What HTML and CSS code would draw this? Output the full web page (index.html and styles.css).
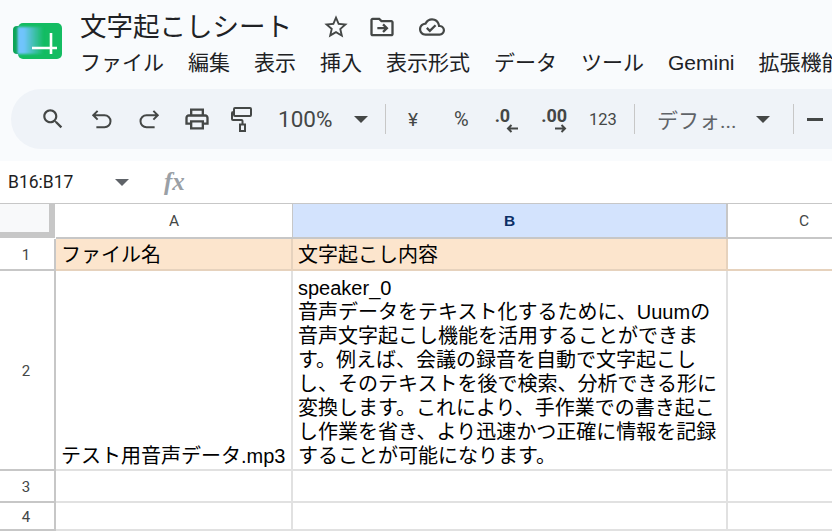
FILE: index.html
```html
<!DOCTYPE html>
<html>
	<head>
		<meta charset="UTF-8">
		<title>文字起こしシート</title>
		<link rel="stylesheet" href="styles.css">
	</head>
	<body>
		<!--title and menu-->
		<div class="top">
			<svg class="logo" width="50" height="37" viewBox="0 0 50 37">
				<defs>
					<linearGradient id="logoFade" x1="0" x2="1" y1="0" y2="0">
						<stop offset="0" stop-color="#6fc4fc"/>
						<stop offset="0.25" stop-color="#6fc4fc"/>
						<stop offset="1" stop-color="#14bc62"/>
					</linearGradient>
					<filter id="logoSoft" x="-20%" y="-20%" width="140%" height="140%">
						<feGaussianBlur stdDeviation="0.8"/>
					</filter>
				</defs>
				<rect x="0" y="3" width="20" height="28" rx="4" fill="#0ca556"/>
				<rect x="5" y="0" width="44" height="36" rx="5" fill="#14bc62"/>
				<rect x="4.500" y="4" width="26" height="27" fill="url(#logoFade)" filter="url(#logoSoft)"/>
				<path d="M19 25h25M38 10v21" stroke="#fff" stroke-width="2.600" fill="none"/>
			</svg>
			<div class="top-text">
				<div class="title-row">
					<span class="doc-title">文字起こしシート</span>
					<svg class="title-icon title-star" width="28" height="28" viewBox="0 0 24 24"><path d="M22 9.24l-7.19-.62L12 2 9.19 8.63 2 9.24l5.46 4.73L5.82 21 12 17.27 18.18 21l-1.63-7.03L22 9.24zM12 15.4l-3.76 2.27 1-4.28-3.32-2.88 4.38-.38L12 6.1l1.71 4.04 4.38.38-3.32 2.88 1 4.28L12 15.4z"/></svg>
					<svg class="title-icon title-folder" width="28" height="28" viewBox="0 0 24 24"><path d="M20 6h-8l-2-2H4c-1.1 0-2 .9-2 2v12c0 1.1.9 2 2 2h16c1.1 0 2-.9 2-2V8c0-1.1-.9-2-2-2zm0 12H4V6h5.17l2 2H20v10zM12.2 10.4l1.6 1.6H8v2h5.8l-1.6 1.6 1.4 1.4 4-4-4-4-1.4 1.4z"/></svg>
					<svg class="title-icon" width="26" height="26" viewBox="0 0 24 24"><path d="M19.35 10.04C18.67 6.59 15.64 4 12 4 9.11 4 6.6 5.64 5.35 8.04 2.34 8.36 0 10.91 0 14c0 3.31 2.69 6 6 6h13c2.76 0 5-2.24 5-5 0-2.64-2.05-4.78-4.65-4.96zM19 18H6c-2.21 0-4-1.79-4-4 0-2.05 1.53-3.76 3.56-3.97l1.07-.11.5-.95C8.08 7.14 9.94 6 12 6c2.62 0 4.88 1.86 5.39 4.43l.3 1.5 1.53.11c1.56.1 2.78 1.41 2.78 2.96 0 1.65-1.35 3-3 3zm-9-3.82l-2.09-2.09L6.5 13.5 10 17l6-6-1.41-1.41L10 14.18z"/></svg>
				</div>
				<div class="menu">
					<span>ファイル</span>
					<span>編集</span>
					<span>表示</span>
					<span>挿入</span>
					<span>表示形式</span>
					<span>データ</span>
					<span>ツール</span>
					<span>Gemini</span>
					<span>拡張機能</span>
				</div>
			</div>
		</div>

		<!--toolbar-->
		<div class="toolbar">
			<svg class="tool tool-search" width="26" height="26" viewBox="0 0 24 24"><path d="M15.5 14h-.79l-.28-.27C15.41 12.59 16 11.11 16 9.5 16 5.91 13.09 3 9.5 3S3 5.91 3 9.5 5.91 16 9.5 16c1.61 0 3.09-.59 4.23-1.57l.27.28v.79l5 4.99L20.49 19l-4.99-5zm-6 0C7.01 14 5 11.99 5 9.5S7.01 5 9.5 5 14 7.01 14 9.5 11.99 14 9.5 14z"/></svg>
			<svg class="tool tool-undo" width="30" height="30" viewBox="0 0 24 24"><path class="line" d="M8.5 5.5L5 9l3.5 3.500M5 9h9a4.800 4.800 0 0 1 0 9.600H7.500"/></svg>
			<svg class="tool tool-redo" width="30" height="30" viewBox="0 0 24 24"><path class="line" d="M15.500 5.500L19 9l-3.500 3.500M19 9h-9a4.800 4.800 0 0 0 0 9.600h6.500"/></svg>
			<svg class="tool tool-print" width="28" height="28" viewBox="0 0 24 24"><path d="M19 8h-1V3H6v5H5c-1.660 0-3 1.340-3 3v6h4v4h12v-4h4v-6c0-1.660-1.340-3-3-3zM8 5h8v3H8V5zm8 14H8v-4h8v4zm2-4v-2H6v2H4v-4c0-.55.45-1 1-1h14c.55 0 1 .45 1 1v4h-2z"/></svg>
			<svg class="tool tool-paint" width="24" height="28" viewBox="0 0 24 28"><path class="paint" d="M5 3h15a1 1 0 0 1 1 1v6a1 1 0 0 1-1 1H5a1 1 0 0 1-1-1V4a1 1 0 0 1 1-1zM4 7H3a1 1 0 0 0-1 1v6a1 1 0 0 0 1 1h8.500a1 1 0 0 1 1 1v3M10 19.500h5v6.500h-5z"/></svg>
			<span class="zoom-val">100%</span>
			<i class="caret caret-zoom"></i>
			<i class="sep sep-first"></i>
			<span class="sym sym-yen">¥</span>
			<span class="sym sym-pct">%</span>
			<span class="dec dec-less">.0<svg width="14" height="11" viewBox="0 0 14 11"><path d="M13 5.500H3M6.500 2L3 5.500 6.500 9" fill="none" stroke="#444746" stroke-width="2"/></svg></span>
			<span class="dec dec-more">.00<svg width="14" height="11" viewBox="0 0 14 11"><path d="M1 5.500h10M7.500 2L11 5.500 7.500 9" fill="none" stroke="#444746" stroke-width="2"/></svg></span>
			<span class="sym sym-num">123</span>
			<i class="sep sep-num"></i>
			<span class="font-name">デフォ...</span>
			<i class="caret caret-font"></i>
			<i class="sep sep-font"></i>
			<i class="minus"></i>
		</div>

		<!--name box and formula bar-->
		<div class="formula-bar">
			<span class="name-box">B16:B17</span>
			<i class="caret caret-name"></i>
			<span class="fx">fx</span>
		</div>

		<!--sheet-->
		<div class="sheet">
			<div class="corner"></div>
			<div class="col-head">A</div>
			<div class="col-head col-on">B</div>
			<div class="col-head col-last">C</div>

			<div class="row-head">1</div>
			<div class="cell head-cell">ファイル名</div>
			<div class="cell head-cell">文字起こし内容</div>
			<div class="cell cell-last head-side"></div>

			<div class="row-head">2</div>
			<div class="cell cell-file">テスト用音声データ.mp3</div>
			<div class="cell cell-text">speaker_0<br>音声データをテキスト化するために、Uuumの<br>音声文字起こし機能を活用することができま<br>す。例えば、会議の録音を自動で文字起こし<br>し、そのテキストを後で検索、分析できる形に<br>変換します。これにより、手作業での書き起こ<br>し作業を省き、より迅速かつ正確に情報を記録<br>することが可能になります。</div>
			<div class="cell cell-last"></div>

			<div class="row-head">3</div>
			<div class="cell"></div>
			<div class="cell"></div>
			<div class="cell cell-last"></div>

			<div class="row-head">4</div>
			<div class="cell"></div>
			<div class="cell"></div>
			<div class="cell cell-last"></div>
		</div>
	</body>
</html>
```

FILE: styles.css
```css
*{
	margin: 0;
	padding: 0;
	box-sizing: border-box;
}
html,body{
	height: 531px;
	overflow: hidden;
}
body{
	width: 832px;
	background: #f9fbfd;
	color: #1f1f1f;
	font-family: "Liberation Sans", "Noto Sans CJK JP", sans-serif;
}
i{
	display: block;
	font-style: normal;
}
svg{
	display: block;
	flex: none;
}

/* title and menu */
.top{
	height: 89px;
	display: flex;
	overflow: hidden;
}
.logo{
	margin: 23px 0 0 13px;
}
.top-text{
	margin-left: 17px;
	white-space: nowrap;
}
.title-row{
	height: 49px;
	padding-top: 5px;
	display: flex;
	align-items: center;
}
.doc-title{
	font-size: 26.500px;
	line-height: 36px;
	color: #202124;
	width: 242px;
}
.title-icon{
	fill: #444746;
}
.title-star{
	margin-right: 18px;
}
.title-folder{
	margin-right: 23px;
}
.menu{
	display: flex;
	gap: 24px;
	font-size: 21px;
	line-height: 27px;
	color: #202124;
}

/* toolbar */
.toolbar{
	height: 60px;
	margin-left: 11px;
	padding-left: 29px;
	background: #eff3f8;
	border-radius: 30px 0 0 30px;
	display: flex;
	align-items: center;
	color: #444746;
	white-space: nowrap;
	overflow: hidden;
}
.tool{
	fill: #444746;
}
.tool .line{
	fill: none;
	stroke: #444746;
	stroke-width: 1.600;
}
.tool .paint{
	fill: none;
	stroke: #444746;
	stroke-width: 2;
}
.tool-undo{
	margin-left: 21px;
}
.tool-redo{
	margin-left: 17px;
}
.tool-print{
	margin-left: 19px;
}
.tool-paint{
	margin-left: 19px;
}
.zoom-val{
	font-size: 22.500px;
	margin-left: 24px;
	width: 56px;
	font-family: "Roboto", sans-serif;
}
.caret{
	width: 0;
	height: 0;
	border-left: 7px solid transparent;
	border-right: 7px solid transparent;
	border-top: 7px solid #444746;
}
.caret-zoom{
	margin-left: 20px;
}
.sep{
	width: 1px;
	height: 30px;
	background: #c7c7c7;
}
.sep-first{
	margin-left: 17px;
}
.sym{
	font-size: 19px;
	font-family: "Roboto", sans-serif;
}
.sym-yen{
	margin-left: 22px;
}
.sym-pct{
	margin-left: 36px;
	font-size: 20px;
}
.dec{
	position: relative;
	font-size: 18px;
	font-weight: bold;
	font-family: "Roboto", sans-serif;
	line-height: 20px;
	margin-top: -7px;
}
.dec svg{
	position: absolute;
	top: 17px;
	right: -9px;
}
.dec-less{
	margin-left: 26px;
}
.dec-more{
	margin-left: 31px;
}
.dec-more svg{
	right: -1px;
}
.sym-num{
	margin-left: 22px;
	font-size: 16.500px;
}
.sep-num{
	margin-left: 17px;
}
.font-name{
	font-size: 21px;
	margin-left: 22px;
	width: 79px;
	color: #5f6368;
	font-family: "Roboto", "Noto Sans CJK JP", sans-serif;
}
.caret-font{
	margin-left: 20px;
}
.sep-font{
	margin-left: 23px;
}
.minus{
	margin-left: 13px;
	width: 16px;
	height: 3px;
	background: #444746;
}

/* name box and formula bar */
.formula-bar{
	height: 42px;
	margin-top: 12px;
	background: #fff;
	display: flex;
	align-items: center;
}
.name-box{
	font-size: 17.500px;
	margin-left: 8px;
	width: 107px;
	color: #1f1f1f;
	font-family: "Roboto", sans-serif;
}
.caret-name{
	border-top-color: #5f6368;
}
.fx{
	margin-left: 35px;
	font-family: "Liberation Serif", serif;
	font-style: italic;
	font-weight: bold;
	font-size: 25px;
	color: #9aa0a6;
}

/* sheet */
.sheet{
	height: 328px;
	display: grid;
	grid-template-columns: 56px 237px 435px 152px;
	grid-template-rows: 35px 32px 200px 32px 28px;
	background: #fff;
	font-size: 20px;
	line-height: 24px;
	color: #000;
	overflow: hidden;
	border-top: 1px solid #c7c7c7;
}
.corner{
	background: #f8f9fa;
	border-right: 6px solid #c7c7c7;
	border-bottom: 6px solid #c7c7c7;
	margin: 0 1px 1px 0;
}
.col-head{
	display: flex;
	align-items: center;
	justify-content: center;
	font-size: 15.500px;
	color: #444746;
	font-family: "Roboto", sans-serif;
	border-right: 1px solid #c7c7c7;
	border-bottom: 2px solid #c7c7c7;
}
.col-on{
	background: #d3e3fd;
	color: #0b2f66;
	font-weight: bold;
	font-family: "Liberation Sans", sans-serif;
	border-right-width: 2px;
}
.col-last{
	border-right: 0;
}
.row-head{
	display: flex;
	align-items: center;
	justify-content: center;
	font-size: 15px;
	color: #444746;
	font-family: "Roboto", sans-serif;
	border-right: 2px solid #c7c7c7;
	border-bottom: 2px solid #c7c7c7;
	padding: 2px 2px 0 0;
}
.cell{
	border-right: 2px solid #e1e1e1;
	border-bottom: 2px solid #e1e1e1;
	padding: 0 0 0 5px;
	white-space: nowrap;
	overflow: hidden;
}
.cell-last{
	border-right: 0;
}
.head-cell{
	background: #fce5cd;
	border-color: #e6d2bd;
	line-height: 32px;
}
.head-side{
	border-bottom-color: #e6d2bd;
}
.cell-file{
	display: flex;
	align-items: flex-end;
	padding-bottom: 1px;
}
.cell-text{
	padding-top: 5px;
}
```
